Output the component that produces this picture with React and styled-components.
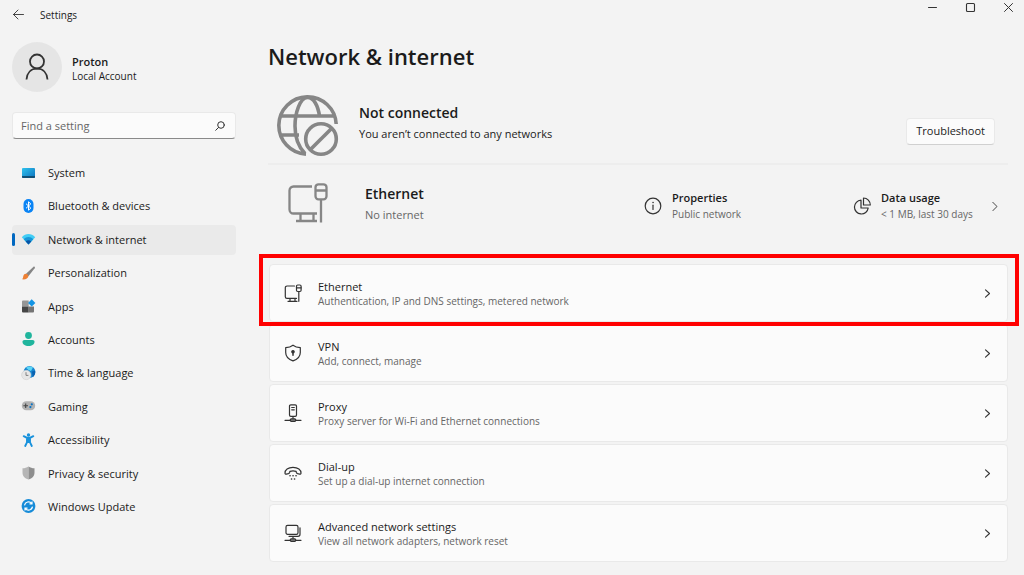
import React from "react";
import styled, { createGlobalStyle, css } from "styled-components";

const bgColor = "#f3f3f3";
const cardColor = "#fbfbfb";
const lineColor = "#e9e9e9";
const fgColor = "#1b1b1b";
const iconColor = "#333333";
const mutedColor = "#666666";
const accentColor = "#0067c0";

const GlobalStyle = createGlobalStyle`
	*{
		box-sizing:border-box;
	}

	body{
		margin:0;
		background-color:${bgColor};
		color:${fgColor};
		font-family:"Open Sans", "Noto Sans", sans-serif;
		font-size:11px;
		line-height:16px;
	}

	button, input{
		font:inherit;
		color:inherit;
	}

	svg{
		display:block;
		flex:none;
		color:${iconColor};
	}
`;

const flex = css`
	display:flex;
	align-items:center;
`;

const Window = styled.div`
	display:flex;
	flex-direction:column;
	min-height:100vh;
`;

const TitleBar = styled.header`
	${flex}
	height:30px;
	padding-left:12px;
	gap:15px;
	font-size:10px;
`;

const PlainButton = styled.button`
	${flex}
	justify-content:center;
	border:0;
	padding:0;
	background:none;
`;

const WindowButtons = styled.div`
	display:flex;
	align-self:flex-start;
	gap:8px;
	margin-left:auto;
	padding-right:1px;

	button{
		width:30px;
		height:15px;
	}
`;

const Body = styled.div`
	display:flex;
	flex:1;
`;

const Sidebar = styled.aside`
	display:flex;
	flex-direction:column;
	flex:none;
	width:236px;
	padding:12px 0 53px 12px;
`;

const User = styled.div`
	${flex}
	gap:10px;
	font-size:10px;
	line-height:15px;

	strong{
		display:block;
		font-size:11px;
		font-weight:600;
	}
`;

const UserName = styled.div`
	padding-top:3px;
`;

const Avatar = styled.div`
	${flex}
	justify-content:center;
	width:50px;
	height:50px;
	border-radius:50%;
	background-color:#e5e5e5;
`;

const Search = styled.label`
	${flex}
	height:27px;
	margin:20px 0 19px;
	padding:0 10px 0 8px;
	border:1px solid ${lineColor};
	border-bottom-color:#8a8a8a;
	border-radius:4px;
	background-color:${cardColor};

	input{
		flex:1;
		min-width:0;
		padding:0;
		border:0;
		outline:0;
		background:none;
	}

	input::placeholder{
		color:${mutedColor};
		opacity:1;
	}
`;

const Nav = styled.nav`
	display:flex;
	flex:1;
	flex-direction:column;
	justify-content:space-between;
`;

const NavItem = styled.a`
	${flex}
	height:30px;
	gap:10px;
	border-radius:4px;
	color:${fgColor};
	text-decoration:none;
	background-color:${({$active}) => $active ? "#eaeaea" : "transparent"};

	&::before{
		content:"";
		width:3px;
		height:13px;
		margin-right:-4px;
		border-radius:2px;
		background-color:${({$active}) => $active ? accentColor : "transparent"};
	}

	svg{
		margin-right:2px;
	}
`;

const Main = styled.main`
	flex:1;
	min-width:0;
	padding:10px 16px 13px 32px;
`;

const Title = styled.h1`
	margin:0 0 15px;
	font-size:22px;
	font-weight:600;
	line-height:32px;
`;

const Status = styled.section`
	${flex}
	height:78px;
	padding:0 13px 0 9px;
	gap:20px;
	border-bottom:2px solid #ededed;
`;

const Connection = styled.section`
	${flex}
	height:82px;
	margin-bottom:17px;
	padding:0 9px 0 20px;
	gap:37px;
`;

const Summary = styled.div`
	margin-right:auto;
	padding-bottom:4px;

	h2{
		margin:0;
		font-size:14px;
		font-weight:600;
		line-height:22px;
	}

	p{
		margin:0;
		font-size:11px;
		line-height:20px;
		color:${({$muted}) => $muted ? mutedColor : fgColor};
	}
`;

const Troubleshoot = styled.button`
	height:27px;
	margin-top:12px;
	padding:0 9px;
	border:1px solid ${lineColor};
	border-bottom-color:#d0d0d0;
	border-radius:4px;
	background-color:${cardColor};
`;

const Stats = styled.div`
	display:flex;
`;

const Stat = styled.div`
	${flex}
	gap:10px;
	width:${({$wide}) => $wide ? "209px" : "137px"};
	font-size:10px;
	line-height:17px;
	color:${mutedColor};

	strong{
		display:block;
		font-size:11px;
		font-weight:600;
		color:${fgColor};
	}
`;

const CardList = styled.ul`
	display:grid;
	gap:3px;
	margin:0 0 0 1px;
	padding:0;
	list-style:none;

	li{
		position:relative;
	}
`;

const Highlight = styled.div`
	position:absolute;
	inset:-10px -11px -5px -10px;
	border:4px solid #ff0000;
	pointer-events:none;
	z-index:1;
`;

const Card = styled.a`
	${flex}
	height:58px;
	margin-bottom:-1px;
	padding:0 15px 0 14px;
	gap:16px;
	border:1px solid ${lineColor};
	border-radius:4px;
	background-color:${cardColor};
	color:${fgColor};
	text-decoration:none;

	div{
		flex:1;
		padding-top:2px;
		line-height:15px;
	}

	small{
		display:block;
		font-size:10px;
		color:${mutedColor};
	}
`;

const Line = ({size = 18, box = 18, width = 1.2, children}) => (
	<svg width={size} height={size} viewBox={`0 0 ${box} ${box}`} fill="none" stroke="currentColor" strokeWidth={width} strokeLinecap="round" strokeLinejoin="round" aria-hidden="true">
		{children}
	</svg>
);

const Chevron = () => (
	<Line size={9} box={9} width={1.1}><path d="M2.500.8 6.500 4.500 2.500 8.200"/></Line>
);

const GlobeIcon = () => (
	<svg width="62" height="64" viewBox="0 -2 62 64" fill="none" stroke="#868686" strokeWidth="3.6" aria-hidden="true">
		<path d="M29 59.200A28.700 28.700 0 1 1 59.200 29M3.500 21H58M3.500 40H22M28 58.500C21.500 52 18 42 18 31 18 18 23 2.500 30.500 2.500 37 2.500 41 11 42.500 21"/>
		<circle cx="44" cy="44" r="18.500" fill={bgColor} stroke="none"/>
		<circle cx="44" cy="44" r="15.300"/>
		<path d="M33.200 54.800 54.800 33.200"/>
	</svg>
);

const BigEthernetIcon = () => (
	<svg width="40" height="46" viewBox="0 0 40 46" fill="none" stroke="#868686" strokeWidth="2.3" aria-hidden="true">
		<path d="M24 3.500H5.500a4 4 0 0 0-4 4v19a4 4 0 0 0 4 4H29M12.500 31v6.500M25.500 31v6.500M8 38H29"/>
		<rect x="27.500" y="1.300" width="11" height="15" rx="3"/>
		<path d="M27.500 7.500h11M33 16.500V39.500"/>
	</svg>
);

const EthernetIcon = () => (
	<Line><path d="M10.500 2H3a1.700 1.700 0 0 0-1.700 1.700v9A1.700 1.700 0 0 0 3 14.400h9.500M6 14.500v2.700M11 14.500v2.700M4 17.300h9"/><rect x="12.500" y="1" width="4.600" height="6.500" rx="1.200"/><path d="M12.500 3.800h4.600M14.800 7.500v9.800"/></Line>
);

const VpnIcon = () => (
	<Line><path d="M9 1.200C7 2.800 4.600 3.500 1.700 3.600V8.500c0 4 2.600 6.800 7.300 8.400 4.700-1.600 7.300-4.400 7.300-8.400V3.600C13.400 3.500 11 2.800 9 1.200Z"/><circle cx="9" cy="7.800" r="1.200" fill="currentColor"/><path d="M9 8v3.300" strokeWidth="1.500"/></Line>
);

const ProxyIcon = () => (
	<Line><rect x="5.500" y=".8" width="7" height="11.500" rx="1.300"/><path d="M7.700 3.500h2.600M7.700 5.800h2.600M9 12.500v2M1 16.300h16"/><rect x="6.300" y="14.800" width="5.400" height="2.500" rx="1" fill="#888"/></Line>
);

const DialIcon = () => (
	<Line><path d="M2.300 10.200 4.400 9.700c.7-.2 1-.6 1.200-1.200l.3-1.100c1.900-.7 4.300-.7 6.200 0l.3 1.100c.2.600.5 1 1.200 1.200l2.100.5c.7.200 1.200-.3 1.300-1C17.300 5.800 13.800 3.300 9 3.300S.7 5.800 1 9.200c.1.700.6 1.200 1.300 1Z"/><path d="M6 11.800h.1M9 11.800h.1M12 11.800h.1M7.500 15h.1M10.500 15h.1" strokeWidth="1.600"/></Line>
);

const AdvancedIcon = () => (
	<Line><rect x="2" y="1.300" width="12" height="9" rx="1.600"/><path d="M16 3.800v6.500a2 2 0 0 1-2 2H5M9 12.500v2M1 16.300h16"/><rect x="6.300" y="14.800" width="5.400" height="2.500" rx="1" fill="#888"/></Line>
);

const InfoIcon = () => (
	<Line><circle cx="9" cy="9" r="7.800"/><path d="M9 8.200v4.300"/><path d="M9 5.500h.1" strokeWidth="1.500"/></Line>
);

const UsageIcon = () => (
	<Line><path d="M8 3.200A6.900 6.900 0 1 0 15.200 11H8V3.200Z"/><path d="M10.500 1v7h6.800A6.900 6.900 0 0 0 10.500 1Z"/></Line>
);

const NavSvg = ({children}) => (
	<svg width="15" height="15" viewBox="0 0 15 15" aria-hidden="true">{children}</svg>
);

const SystemIcon = () => (
	<NavSvg>
		<defs><linearGradient id="system" x1="0" y1="0" x2="1" y2="1"><stop stopColor="#2fc3ee"/><stop offset="1" stopColor="#0d71bd"/></linearGradient></defs>
		<rect x="1" y="2" width="13" height="10" rx="1" fill="url(#system)"/>
		<path d="M1 10h13v1a1 1 0 0 1-1 1H2a1 1 0 0 1-1-1Z" fill="#104f75"/>
	</NavSvg>
);

const BluetoothIcon = () => (
	<NavSvg>
		<rect x="2.500" y="0" width="10" height="14" rx="5" fill="#0a84f5"/>
		<path d="M5 4.700 9.800 9.100 7.500 11.200V2.800L9.800 4.900 5 9.300" fill="none" stroke="#fff" strokeWidth="1"/>
	</NavSvg>
);

const NetworkIcon = () => (
	<NavSvg>
		<path d="M.8 5.200C4.600 1 10.400 1 14.200 5.200L7.500 12.500Z" fill="#41cdf5"/>
		<path d="M2.700 7.200C5.400 4.300 9.600 4.300 12.300 7.200L7.500 12.500Z" fill="#1897d9"/>
		<path d="M4.700 9.400C6.300 7.700 8.700 7.700 10.300 9.400L7.500 12.500Z" fill="#0753a5"/>
	</NavSvg>
);

const BrushIcon = () => (
	<NavSvg>
		<path d="M5 7.800 12.300.9c1-.8 2.200.2 1.400 1.400L7.400 10.200Z" fill="#858585"/>
		<path d="M4.800 7.800c1.500 0 2.600 1.200 2.600 2.500C7 12.600 4.500 13.800 1 13.300c1.300-1 .9-2 1.400-3.500.4-1.200 1.200-2 2.400-2Z" fill="#ed8034"/>
	</NavSvg>
);

const AppsIcon = () => (
	<NavSvg>
		<path d="M2 1.500h5.700v6H1v-5a1 1 0 0 1 1-1Z" fill="#969696"/>
		<path d="M1 7.500h6.700v6H2a1 1 0 0 1-1-1Z" fill="#454545"/>
		<path d="M7.700 7.500H13v5a1 1 0 0 1-1 1H7.700Z" fill="#747474"/>
		<path d="M10.700.2 14.400 3.900 10.700 7.600 7 3.900Z" fill="#1394e4"/>
	</NavSvg>
);

const AccountsIcon = () => (
	<NavSvg>
		<circle cx="7.500" cy="3.500" r="3.400" fill="#20b59d"/>
		<path d="M3.500 8h8c1.300 0 2 .8 2 1.800 0 2.500-2.300 4.200-6 4.200s-6-1.700-6-4.200c0-1 .7-1.800 2-1.800Z" fill="#20b59d"/>
	</NavSvg>
);

const TimeIcon = () => (
	<NavSvg>
		<circle cx="8.500" cy="6" r="5.900" fill="#1685cf"/>
		<path d="M5 1.800C7 .1 10-.1 12 1.400L10 5 7.500 4Z" fill="#5dd5f5"/>
		<path d="M11 5.500 14.200 4.800C14.500 7.500 13.500 10 11.700 11Z" fill="#0b61af"/>
		<circle cx="5.300" cy="9" r="4.700" fill="#e7e7e7" stroke="#c9c9c9" strokeWidth=".5"/>
		<path d="M5 6.200v3.200h2.400" fill="none" stroke="#777" strokeWidth=".9"/>
	</NavSvg>
);

const GamingIcon = () => (
	<NavSvg>
		<rect x=".8" y="2.300" width="13.400" height="9" rx="4.500" fill="#b2b2b2"/>
		<path d="M4.700 4.500v4.600M2.400 6.800H7" stroke="#444" strokeWidth="1.100"/>
		<circle cx="10.800" cy="5.300" r="1.100" fill="#0873c5"/>
		<circle cx="9.400" cy="8.100" r="1.100" fill="#0873c5"/>
	</NavSvg>
);

const AccessibilityIcon = () => (
	<NavSvg>
		<circle cx="7.500" cy="2" r="1.700" fill="#1992dc"/>
		<path d="M2.700 3.200 5.700 4.700h3.600l3-1.500M7.500 5v4M6 5.500v3.800L4.200 13M9 5.500v3.800l1.800 3.700" fill="none" stroke="#1992dc" strokeWidth="1.900" strokeLinecap="round"/>
	</NavSvg>
);

const PrivacyIcon = () => (
	<NavSvg>
		<path d="M7.500.5C5.700 1.700 3.800 2.300 1.500 2.300V6.500c0 3.600 2.200 5.800 6 7Z" fill="#b5b5b5"/>
		<path d="M7.500.5c1.800 1.200 3.700 1.800 6 1.800V6.500c0 3.600-2.200 5.800-6 7Z" fill="#8e8e8e"/>
	</NavSvg>
);

const UpdateIcon = () => (
	<NavSvg>
		<circle cx="7.500" cy="7" r="6.900" fill="#168bd8"/>
		<path d="M3.500 6.300A4.100 4.100 0 0 1 10.800 4.500M11 2.400v2.500H8.500M11.500 7.700A4.100 4.100 0 0 1 4.200 9.500M4 11.600V9.100h2.500" fill="none" stroke="#fff" strokeWidth="1.200"/>
	</NavSvg>
);

const navItems = [
	["System", SystemIcon],
	["Bluetooth & devices", BluetoothIcon],
	["Network & internet", NetworkIcon],
	["Personalization", BrushIcon],
	["Apps", AppsIcon],
	["Accounts", AccountsIcon],
	["Time & language", TimeIcon],
	["Gaming", GamingIcon],
	["Accessibility", AccessibilityIcon],
	["Privacy & security", PrivacyIcon],
	["Windows Update", UpdateIcon],
];

const cards = [
	["Ethernet", "Authentication, IP and DNS settings, metered network", EthernetIcon],
	["VPN", "Add, connect, manage", VpnIcon],
	["Proxy", "Proxy server for Wi-Fi and Ethernet connections", ProxyIcon],
	["Dial-up", "Set up a dial-up internet connection", DialIcon],
	["Advanced network settings", "View all network adapters, network reset", AdvancedIcon],
];

const Header = () => (
	<TitleBar>
		<PlainButton aria-label="Back">
			<Line size={13} box={13} width={0.9}><path d="M11.500 5.500H1.500M6 1 1.500 5.500 6 10"/></Line>
		</PlainButton>
		<span>Settings</span>
		<WindowButtons>
			<PlainButton aria-label="Minimize"><Line size={11} box={11} width={1}><path d="M1.500 5.500h8"/></Line></PlainButton>
			<PlainButton aria-label="Maximize"><Line size={11} box={11} width={1.1}><rect x="1.500" y="1.500" width="8" height="8" rx="1"/></Line></PlainButton>
			<PlainButton aria-label="Close"><Line size={11} box={11} width={1}><path d="m1.500 1.500 8 8M9.500 1.500l-8 8"/></Line></PlainButton>
		</WindowButtons>
	</TitleBar>
);

const SideMenu = () => (
	<Sidebar>
		<User>
			<Avatar>
				<Line size={28} box={28} width={1.8}><circle cx="14" cy="8.500" r="7"/><path d="M3.500 26.500C4 20 8 15.700 14 15.700S24 20 24.500 26.500" strokeLinecap="butt"/></Line>
			</Avatar>
			<UserName><strong>Proton</strong>Local Account</UserName>
		</User>
		<Search>
			<input type="text" placeholder="Find a setting" aria-label="Find a setting"/>
			<Line size={10} box={10} width={1}><circle cx="6" cy="4" r="3.300"/><path d="M3.500 6.500.7 9.300"/></Line>
		</Search>
		<Nav>
			{navItems.map(([label, Icon]) => (
				<NavItem key={label} href="#" $active={label === "Network & internet"}>
					<Icon/>
					{label}
				</NavItem>
			))}
		</Nav>
	</Sidebar>
);

const App = () => (
	<Window>
		<GlobalStyle/>
		<Header/>
		<Body>
			<SideMenu/>
			<Main>
				<Title>Network & internet</Title>
				<Status>
					<GlobeIcon/>
					<Summary>
						<h2>Not connected</h2>
						<p>You aren’t connected to any networks</p>
					</Summary>
					<Troubleshoot>Troubleshoot</Troubleshoot>
				</Status>
				<Connection>
					<BigEthernetIcon/>
					<Summary $muted>
						<h2>Ethernet</h2>
						<p>No internet</p>
					</Summary>
					<Stats>
						<Stat $wide><InfoIcon/><div><strong>Properties</strong>Public network</div></Stat>
						<Stat><UsageIcon/><div><strong>Data usage</strong>&lt; 1 MB, last 30 days</div></Stat>
						<PlainButton aria-label="Open Ethernet"><Line size={9} box={9} width={0.9}><path d="M2.500 0 7 4.500 2.500 9"/></Line></PlainButton>
					</Stats>
				</Connection>
				<CardList>
					{cards.map(([name, text, Icon], i) => (
						<li key={name}>
							<Card href="#">
								<Icon/>
								<div>{name}<small>{text}</small></div>
								<Chevron/>
							</Card>
							{i === 0 && <Highlight/>}
						</li>
					))}
				</CardList>
			</Main>
		</Body>
	</Window>
);

export default App;
